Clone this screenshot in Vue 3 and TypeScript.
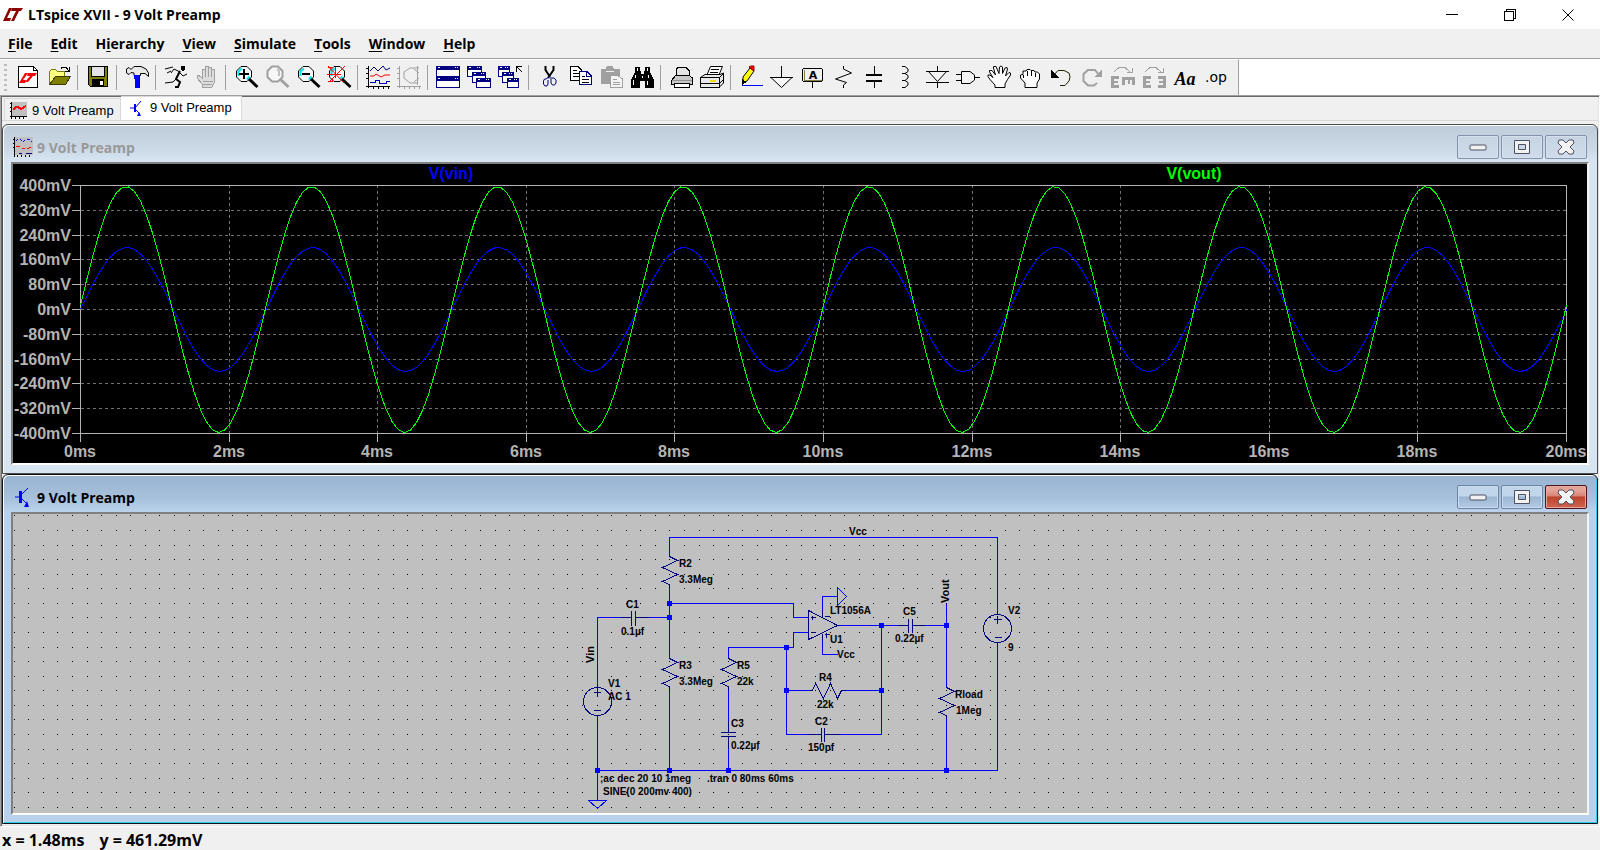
<script setup lang="ts">
interface Shape {
  d: string
  fill?: string
  stroke?: string
  width?: number
  smooth?: boolean
}
interface Tool {
  name: string
  shapes?: Shape[]
  text?: string
  textClass?: string
  disabled?: boolean
}

const line = (d: string, stroke = '#000', width = 1, smooth = false): Shape => ({ d, stroke, width, smooth })
const area = (d: string, fill: string, stroke = 'none', smooth = false): Shape => ({ d, fill, stroke, smooth })

const navy = '#000080'
const grey = '#a0a0a0'
const openHand =
  'M8 23.5V21L3 15.5L1 12.5V11H3L6 13.5L2.5 8V6.5H5L8.5 11L6.5 4V2.5H9L12 9.5L12.5 3L14 2L15.5 3V9.5L18 4L20 3.5L20.5 5L18.5 12L22 8.5L23.5 9V11L20.5 15.5L18 20V23.5Z'
const lens = (stroke: string, cross: string, cyan: boolean): Shape[] => [
  area('M7 2.5H13L17.5 7V13L13 17.5H7L2.5 13V7Z', '#f8f8f8'),
  line('M7 2.5H13L17.5 7V13L13 17.5H7L2.5 13V7Z', stroke, cyan ? 1 : 2, true),
  ...(cyan ? [line('M4.5 12V7.5L8 4.5M13 15.5L15.5 12.5', '#00e0f0', 2, true)] : [line('M12 5L14 7V12', '#c0c0c0', 2, true)]),
  line('M15 15L23.5 23', stroke, 3, true),
  line(cross, stroke, 2),
]
const miniWindow = (x: number, y: number, w: number, h: number): Shape[] => [
  area(`M${x + 0.5} ${y + 0.5}h${w - 1}v${h - 1}h${1 - w}Z`, '#fff', navy),
  area(`M${x} ${y}h${w}v4h${-w}Z`, navy),
  line(`M${x + 2} ${y + 1.5}h2M${x + w - 5} ${y + 1.5}h1M${x + w - 3} ${y + 1.5}h1`, '#fff'),
]

const groups: Tool[][] = [
  [
    {
      name: 'New schematic',
      shapes: [
        area('M2.5 2.5H17.5L21.5 6.5V23.5H2.5Z', '#fff', '#000'),
        line('M17.5 2.5V6.5H21.5'),
        area('M9 9H12L7 16H10L9 19H3Z', '#f00', 'none', true),
        area('M12 9H21L19 12H17L12 18H9L14 12H11Z', '#f00', 'none', true),
      ],
    },
    {
      name: 'Open',
      shapes: [
        area('M2.5 21V7.5L4.5 5.5H8.5L10.5 7.5H17.5V12', '#ffff80', '#808000'),
        area('M2.5 20.5L8.5 12.5H23.5L18.5 20.5Z', '#808000', '#3c3c00'),
        line('M13.5 5.5L15 3.5H19L22 7'),
        line('M22.5 3V8M18 7.5H23'),
      ],
    },
  ],
  [
    {
      name: 'Save',
      shapes: [
        area('M2.5 2.5H21.5V22.5H4.5L2.5 20.5Z', '#808000', '#000'),
        area('M6 3H18V12H6Z', '#e4e4e4'),
        line('M5.5 3V12.5H18.5V3'),
        area('M6 15H18V22H6Z', '#000'),
        area('M14 17H17V21H14Z', '#fff'),
      ],
    },
  ],
  [
    {
      name: 'Control panel',
      shapes: [
        area('M1.5 5L4 3.5L6 5.5L9 2.5H16L21 5L23.5 9V12.5L20 9.5H15.5V11.5H9V9L6 8.5L4 10.5L1.5 9Z', '#e8e8e8', '#000', true),
        area('M9 11H15V15H14V24H10V15H9Z', '#0000ff'),
        line('M14.5 11V24', navy),
      ],
    },
  ],
  [
    {
      name: 'Run',
      shapes: [
        area('M17 2H21V6L19 7L17 6Z', '#000'),
        line('M16 7L12 15L16 18L14 23H11', '#000', 2, true),
        line('M16 8L10 5L7 9M16 9L19 12L23 10', '#000', 1, true),
        line('M12 15L9 18L1 19', '#000', 1, true),
        line('M1 5L9 3M3 9L7 7', '#000', 1, true),
      ],
    },
    {
      name: 'Halt',
      disabled: true,
      shapes: [
        area('M7 23V20L2 14V12L4 11.5L7 14V6L8 5H10V12V3.5L11 2.5H13V12V3.5L14 3H16V12V5.5L17 5L19 5.5V19L17 23Z', '#dcdcdc', grey),
        line('M10.5 5V13M13.5 4V13M16.5 6V13M8 17H18M8 20H17', grey, 1),
      ],
    },
  ],
  [
    { name: 'Zoom in', shapes: lens('#000', 'M5 10H15M10 5V15', true) },
    { name: 'Pan', disabled: true, shapes: lens(grey, '', false) },
    { name: 'Zoom out', shapes: lens('#000', 'M6 10H14', true) },
    {
      name: 'Zoom to fit',
      shapes: [...lens('#000', '', true), line('M1 2L17 19M18 2L2 18', '#f00', 1, true), line('M0 10H14M8 3V14M1 3H5M1 17H5V14', '#f00', 1)],
    },
  ],
  [
    {
      name: 'Autorange',
      shapes: [
        line('M2.5 2V24M0 22.5H24M0 4.5H2M0 9.5H2M0 14.5H2M7.5 23V25M12.5 23V25M17.5 23V25M22.5 23V25'),
        line('M4 7L8 3L12 7L17 2L20 6L24 4', navy, 1, true),
        line('M4 12H8L10 10L15 13L19 11H24', '#f00', 1, true),
        line('M4 18.5H9V16.5H13V19.5H20V17.5H24', '#0000c0'),
      ],
    },
    {
      name: 'Nyquist plot',
      disabled: true,
      shapes: [
        line('M2.5 2V24M0 22.5H24M0 4.5H2M0 9.5H2M0 14.5H2M7.5 23V25M12.5 23V25M17.5 23V25M22.5 23V25', grey),
        line('M22 4H13L7 8V14L13 19H21M20.5 2V21M17 5L22 9M17 18L22 14', grey, 1, true),
      ],
    },
  ],
  [
    { name: 'Tile windows', shapes: [...miniWindow(0, 2, 24, 11), ...miniWindow(0, 13, 24, 11)] },
    { name: 'Cascade windows', shapes: [...miniWindow(0, 2, 15, 11), ...miniWindow(5, 8, 14, 11), ...miniWindow(9, 14, 15, 10)] },
    {
      name: 'Close all windows',
      shapes: [...miniWindow(0, 2, 12, 11), ...miniWindow(4, 8, 12, 11), ...miniWindow(9, 14, 12, 10), line('M18.5 8V2.5H24M19 3L24 8')],
    },
  ],
  [
    {
      name: 'Cut',
      shapes: [
        line('M8.5 2V6L13 13M16.5 2V6L11 14', '#000', 2, true),
        line('M12 13L9 15H7.5L6.5 17V20L8 22H10L11 20V16M12.5 14L15 14H17L19 16V19L17.5 21H15.5L14 19V15', navy, 1, true),
      ],
    },
    {
      name: 'Copy',
      shapes: [
        area('M2.5 2.5H10L13.5 6V16.5H2.5Z', '#fff', '#000'),
        line('M5 6.5H9M5 9.5H11M5 12.5H11'),
        area('M11.5 7.5H19L23.5 12V20.5H11.5Z', '#fff', navy),
        line('M18.5 8V12.5H23', navy),
        line('M14 12.5H17M14 15.5H21M14 18.5H21'),
      ],
    },
    {
      name: 'Paste',
      disabled: true,
      shapes: [
        area('M2 5H7L8 2H14L15 5H21V20H2Z', grey),
        line('M7 7.5H15', '#f0f0f0'),
        area('M11.5 11.5H19L23.5 15V23.5H11.5Z', '#f4f4f4', grey),
        line('M14 15.5H18M14 18.5H21M14 20.5H21', grey),
      ],
    },
    {
      name: 'Find',
      shapes: [
        area('M5 3H10V7H11V10H14V7H15V3H20V8L22 12L24 16V24H15V17H10V24H1V16L3 12L5 8Z', '#000', 'none'),
        line('M7.5 4V7M17.5 4V7M5.5 11V14M3.5 16V21M18.5 11V14M17.5 17V21M12.5 12V14', '#fff', 1),
      ],
    },
  ],
  [
    {
      name: 'Print',
      shapes: [
        area('M7.5 11V5L9 3.5H17L20.5 7V12', '#e4e4e4', '#000'),
        area('M2.5 16.5L6.5 11.5H20.5L23.5 14V20.5H2.5Z', '#c8c8c8', '#000'),
        line('M3 16.5H23', '#909090'),
        area('M5.5 19.5H20.5V23.5H5.5Z', '#fff', '#000'),
      ],
    },
    {
      name: 'Print setup',
      shapes: [
        area('M6.5 12L10.5 2.5H22.5L18.5 12', '#fff', '#000', true),
        line('M11 5.5H19M10 8.5H18'),
        area('M0.5 13.5L5 10.5H20L23.5 9V19L19 23.5H0.5Z', '#e8e8e8', '#000', true),
        line('M0 13.5H19V24M0 19.5H19M19 14L24 9M19 20L24 15'),
        line('M10 16.5H16', '#f0e000', 2),
      ],
    },
  ],
  [
    {
      name: 'Draw wire',
      shapes: [
        area('M4 13L11 4L15 7L8 17L4 19Z', '#ffff00', '#000', true),
        area('M10 3L12 2H15V7Z', '#f00', '#900', true),
        area('M3 15L8 18L3 21Z', '#000'),
        line('M3 21.5H24', '#0000ff'),
      ],
    },
    { name: 'Ground', shapes: [line('M11.5 2V13'), area('M1 13.5H22L11.5 23.5Z', '#f8f8f8', '#000', true), line('M0 13.5H23')] },
    {
      name: 'Label net',
      text: 'A',
      textClass: 'glyph-label',
      shapes: [area('M2.5 4.5H20.5L21.5 5.5V16.5L20.5 17.5H2.5L1.5 16.5V5.5Z', '#f0f0f0', '#000'), line('M3.5 5.5V16.5H20.5', '#808040'), line('M11.5 18V24')],
    },
    { name: 'Resistor', shapes: [line('M11.5 2V5L19.5 9L3.5 15L14.5 18.5L11.5 21V24', '#000', 1, true)] },
    { name: 'Capacitor', shapes: [line('M11.5 2V11M11.5 17V24'), line('M3 11H19M3 17H19', '#000', 2)] },
    { name: 'Inductor', shapes: [line('M8 2.5H11L14 5V7.5L11 9.5H8M11 9.5L14 11.5V14L11 16.5H8M11 16.5L14 18.5V21L11 23.5H8', '#000', 1, true)] },
    { name: 'Diode', shapes: [line('M12.5 2V7M12.5 18V24M1 7.5H24M1 18.5H24'), area('M3.5 7.5H21.5L12.5 17.5Z', '#f4f4f4', '#000', true)] },
    { name: 'Component', shapes: [area('M5.5 7.5H14L18.5 11V16L14 19.5H5.5Z', '#f4f4f4', '#000', true), line('M0 10.5H5M0 16.5H5M19 13.5H24')] },
    { name: 'Move', shapes: [area(openHand, '#fff', '#000', true)] },
    {
      name: 'Drag',
      shapes: [
        area('M7 23.5V19L2.5 14V11L5 10.5V7H8L9 5.5H12L13 6.5H16L17 8H19.5L21.5 10V15L19 19V23.5Z', '#fff', '#000', true),
        line('M9.5 7V12M13.5 7V12M17.5 9V13M5.5 11V14', '#000'),
      ],
    },
    { name: 'Undo', shapes: [line('M4 12L9 6.5H15L20 9L21 13L20 17L16 21.5H11', '#202000', 1, true), area('M2 6V14H10L7 11Z', '#000')] },
    { name: 'Redo', disabled: true, shapes: [line('M19 11L15 6H8L3.5 10V17L8 21.5H14L17 19', grey, 2, true), area('M22 6V13H14Z', grey)] },
    {
      name: 'Rotate',
      disabled: true,
      shapes: [
        line('M3 8L8 3.5H14L19 8M21 4V8.5H16', grey),
        area('M0 12H8V15H3V17H7V19H3V21H8V24H0Z', grey),
        area('M11 13H24V21H21V16H19V20H17V16H14V21H11Z', grey),
      ],
    },
    {
      name: 'Mirror',
      disabled: true,
      shapes: [
        line('M3 8L8 3.5H14L19 8M21 4V8.5H16', grey),
        area('M1 12H9V15H4V17H8V19H4V21H9V24H1Z', grey),
        area('M24 12H16V15H21V17H17V19H21V21H16V24H24Z', grey),
      ],
    },
    { name: 'Text', text: 'Aa', textClass: 'glyph-text' },
    { name: 'SPICE directive', text: '.op', textClass: 'glyph-op' },
  ],
]

const menus = ['File', 'Edit', 'Hierarchy', 'View', 'Simulate', 'Tools', 'Window', 'Help'].map((m) => {
  const at = m === 'Hierarchy' ? 1 : 0
  return { before: m.slice(0, at), key: m[at], after: m.slice(at + 1) }
})

/* Plot geometry */
const left = 80
const right = 1566
const top = 185
const bottom = 433
const zero = 309
const yTicks = Array.from({ length: 11 }, (_, i) => ({
  y: Math.round(top + (i * (bottom - top)) / 10) + 0.5,
  label: `${400 - 80 * i}mV`,
}))
const xTicks = Array.from({ length: 11 }, (_, i) => ({
  x: Math.round(left + (i * (right - left)) / 10) + 0.5,
  label: `${2 * i}ms`,
}))
const trace = (amplitude: number, lead: number): string => {
  const period = (right - left) / 8
  const points: string[] = []
  for (let x = left; x <= right; x += 6) {
    points.push(`${x + 0.5},${(zero + 0.5 - amplitude * Math.sin((2 * Math.PI * (x - left + lead)) / period)).toFixed(1)}`)
  }
  points.push(`${right + 0.5},${(zero + 0.5 - amplitude * Math.sin((2 * Math.PI * lead) / period)).toFixed(1)}`)
  return points.join(' ')
}
const vin = trace(62, 0)
const vout = trace(123, 1)

/* Schematic geometry */
const pitch = 14.573
let dots = ''
for (let r = 0; r < 21; r++) {
  for (let c = 0; c < 108; c++) {
    dots += `M${Math.round(13.68 + c * pitch)} ${Math.round(515.45 + r * pitch)}h1v1h-1z`
  }
}
const wires = [
  'M669 556V537H997V614', 'M669 585V658', 'M669 687V770', 'M597 688V617H620', 'M648 617H669', 'M669 603H793V617H808',
  'M808 632H793V647H728V658', 'M728 687V720', 'M728 748V770', 'M786 647V734H808', 'M786 690H808', 'M845 690H881',
  'M838 734H881V625', 'M837 625H897', 'M924 625H946', 'M946 603V686', 'M946 716V770', 'M997 642V770H597', 'M597 716V800',
  'M588 800H606L597 808Z', 'M822 609V596H837', 'M837 587V605L846 596Z', 'M822 640V654H837',
].join('')
const zig = (x: number, y: number) => `M${x} ${y}v1l8 4l-15 7l15 7l-15 7l7 3v3`
const symbols = [
  zig(669, 555), zig(669, 657), zig(728, 657), zig(946, 686),
  'M808 690H812L815 683L823 698L830 683L837 698L841 690H845',
  'M620 617H631M631 610V625M635 610V625M635 617H648',
  'M897 625H908M908 618V632M912 618V632M912 625H924',
  'M808 734H821M821 727V741M824 727V741M824 734H838',
  'M728 720V732M720 732H735M720 736H735M728 736V748',
  'M597 688V684M593 692H600M597 688V696M593 710H600M597 715V720',
  'M997 610V614M993 619H1001M997 615V623M994 637H1001M997 642V646',
  'M808 610V639L837 625Z', 'M810 617H814M812 615V619M810 632H814', 'M822 609V617M824 616H829M822 633V640M824 634H829M826 632V637',
].join('')
const joints = [[669, 603], [669, 617], [786, 647], [786, 690], [881, 690], [881, 625], [946, 625], [597, 770], [669, 770], [728, 770], [946, 770]]
const labels: { x: number; y: number; t: string }[] = [
  { x: 849, y: 535, t: 'Vcc' }, { x: 679, y: 567, t: 'R2' }, { x: 679, y: 583, t: '3.3Meg' }, { x: 626, y: 608, t: 'C1' },
  { x: 621, y: 635, t: '0.1µf' }, { x: 679, y: 669, t: 'R3' }, { x: 679, y: 685, t: '3.3Meg' }, { x: 737, y: 669, t: 'R5' },
  { x: 737, y: 685, t: '22k' }, { x: 608, y: 687, t: 'V1' }, { x: 608, y: 700, t: 'AC 1' }, { x: 731, y: 727, t: 'C3' },
  { x: 731, y: 749, t: '0.22µf' }, { x: 819, y: 681, t: 'R4' }, { x: 817, y: 708, t: '22k' }, { x: 815, y: 725, t: 'C2' },
  { x: 808, y: 751, t: '150pf' }, { x: 830, y: 614, t: 'LT1056A' }, { x: 830, y: 643, t: 'U1' }, { x: 837, y: 658, t: 'Vcc' },
  { x: 903, y: 615, t: 'C5' }, { x: 895, y: 642, t: '0.22µf' }, { x: 1008, y: 614, t: 'V2' }, { x: 1008, y: 651, t: '9' },
  { x: 955, y: 698, t: 'Rload' }, { x: 956, y: 714, t: '1Meg' }, { x: 600, y: 782, t: ';ac dec 20 10 1meg' },
  { x: 707, y: 782, t: '.tran 0 80ms 60ms' }, { x: 603, y: 795, t: 'SINE(0 200mv 400)' },
]
</script>

<template>
  <div class="app">
    <header class="titlebar">
      <svg class="logo" width="20" height="14" viewBox="0 0 20 14" aria-hidden="true">
        <path d="M6 0H9L4 10H8L7 13H0Z" fill="#8b0000" />
        <path d="M9 0H20L18 3H16L11 13H8L13 3H8Z" fill="#8b0000" />
      </svg>
      <h1>LTspice XVII - 9 Volt Preamp</h1>
      <div class="chrome">
        <button aria-label="Minimize"><svg width="12" height="12"><path d="M0 5.5H12" /></svg></button>
        <button aria-label="Restore"><svg width="12" height="12"><path d="M0.5 2.5H9.5V11.5H0.5ZM2.5 2V0.5H11.5V9.5H10" /></svg></button>
        <button aria-label="Close"><svg class="smooth" width="12" height="12"><path d="M0.5 0.5L11.5 11.5M11.5 0.5L0.5 11.5" /></svg></button>
      </div>
    </header>

    <nav class="menubar">
      <button v-for="m in menus" :key="m.key + m.after">{{ m.before }}<u>{{ m.key }}</u>{{ m.after }}</button>
    </nav>

    <div class="toolrow">
      <div class="toolbar" role="toolbar" aria-label="Tools">
        <span class="grip"></span>
        <div v-for="(g, gi) in groups" :key="gi" class="group">
          <button v-for="t in g" :key="t.name" :aria-label="t.name" :disabled="t.disabled">
            <svg width="25" height="25" viewBox="0 0 25 25">
              <path
                v-for="(s, si) in t.shapes"
                :key="si"
                :d="s.d"
                :fill="s.fill ?? 'none'"
                :stroke="s.stroke ?? 'none'"
                :stroke-width="s.width ?? 1"
                :shape-rendering="s.smooth ? 'auto' : 'crispEdges'"
              />
              <text v-if="t.text" :class="t.textClass" x="12" :y="t.text === 'A' ? 15 : t.text === 'Aa' ? 21 : 18" text-anchor="middle">{{ t.text }}</text>
            </svg>
          </button>
        </div>
      </div>
    </div>

    <main class="workspace">
      <div class="tabs" role="tablist">
        <button class="tab" role="tab" aria-selected="false">
          <svg width="17" height="17" viewBox="0 0 17 17" shape-rendering="crispEdges">
            <rect x="2" width="15" height="15" fill="#c0c0c0" />
            <path d="M1.5 0V17M0 1.5H2M0 5.5H2M0 9.5H2M0 14.5H17M5.5 14V17M9.5 14V17M13.5 14V17" fill="none" stroke="#000" />
            <path d="M3 8L6 5H8L11 7L16 4" fill="none" stroke="#f00" stroke-width="2" />
          </svg>
          <span>9 Volt Preamp</span>
        </button>
        <button class="tab active" role="tab" aria-selected="true">
          <svg width="17" height="17" viewBox="0 0 17 17">
            <path d="M0 8H4M5 8L11 1M6 10L10 14" fill="none" stroke="#00f" />
            <path d="M4 4H6V12H4ZM11 16H7L9 12Z" fill="#00f" />
          </svg>
          <span>9 Volt Preamp</span>
        </button>
      </div>

      <section class="window">
        <header class="caption">
          <svg width="20" height="20" viewBox="0 0 20 20" shape-rendering="crispEdges">
            <rect x="2" width="18" height="18" fill="#c0c0c0" />
            <path d="M1.5 0V20M0 2.5H2M0 6.5H2M0 10.5H2M4.5 18V20M8.5 18V20M12.5 18V20M16.5 18V20" fill="none" stroke="#000" />
            <path d="M3 4L6 1L10 5L13 2L15 2L19 5" fill="none" stroke="#00f" stroke-dasharray="3 2" />
            <path d="M3 9.5H7L10 11.5H15L19 9.5" fill="none" stroke="#f00" stroke-dasharray="4 2" />
            <path d="M6 16.5H9M13 16.5H19" fill="none" stroke="#000080" />
          </svg>
          <h2>9 Volt Preamp</h2>
          <div class="controls">
            <button aria-label="Minimize plot"><svg width="20" height="16"><rect x="2" y="6" width="16" height="5" rx="1" /></svg></button>
            <button aria-label="Maximize plot"><svg width="20" height="16"><path fill-rule="evenodd" d="M2.5 1.5H17.5V14.5H2.5ZM6.5 5.5V10.5H13.5V5.5Z" /></svg></button>
            <button aria-label="Close plot"><svg width="20" height="16"><path d="M3 1H7L10 4L13 1H17L18 4L14 8L18 12L17 15H13L10 12L7 15H3L2 12L6 8L2 4Z" /></svg></button>
          </div>
        </header>
        <svg class="view plot" viewBox="13 164 1574 299" role="img" aria-label="Waveforms">
          <g class="grid">
            <path v-for="t in yTicks.slice(1, 10)" :key="t.y" :d="`M81 ${t.y}H${right}`" />
            <path v-for="t in xTicks.slice(1, 10)" :key="t.x" :d="`M${t.x} ${top}V${bottom}`" />
          </g>
          <g class="axis">
            <path d="M80.5 185.5H1566.5V433.5H80.5Z" />
            <path v-for="t in yTicks" :key="t.y" :d="`M72 ${t.y}H80`" />
            <path v-for="t in xTicks" :key="t.x" :d="`M${t.x} 433V442`" />
          </g>
          <polyline class="trace vin" :points="vin" />
          <polyline class="trace vout" :points="vout" />
          <text v-for="t in yTicks" :key="t.label" x="71" :y="Math.floor(t.y) + 6" text-anchor="end">{{ t.label }}</text>
          <text v-for="t in xTicks" :key="t.label" :x="Math.floor(t.x)" y="457" text-anchor="middle">{{ t.label }}</text>
          <text class="name-vin" x="451" y="179" text-anchor="middle">V(vin)</text>
          <text class="name-vout" x="1194" y="179" text-anchor="middle">V(vout)</text>
        </svg>
      </section>

      <section class="window active">
        <header class="caption">
          <svg width="20" height="20" viewBox="0 0 20 20">
            <path d="M2 10H6M8 8L15 1M8 11L14 17" fill="none" stroke="#00f" />
            <path d="M6 4H9V16H6ZM16 20H11L14 14Z" fill="#00f" />
          </svg>
          <h2>9 Volt Preamp</h2>
          <div class="controls">
            <button aria-label="Minimize schematic"><svg width="20" height="16"><rect x="2" y="6" width="16" height="5" rx="1" /></svg></button>
            <button aria-label="Maximize schematic"><svg width="20" height="16"><path fill-rule="evenodd" d="M2.5 1.5H17.5V14.5H2.5ZM6.5 5.5V10.5H13.5V5.5Z" /></svg></button>
            <button class="close" aria-label="Close schematic"><svg width="20" height="16"><path d="M3 1H7L10 4L13 1H17L18 4L14 8L18 12L17 15H13L10 12L7 15H3L2 12L6 8L2 4Z" /></svg></button>
          </div>
        </header>
        <svg class="view schematic" viewBox="13 514 1574 299" role="img" aria-label="Preamp schematic">
          <path class="dots" :d="dots" />
          <g transform="translate(0.5 0.5)">
            <path class="wire" :d="wires" />
            <path class="symbol" :d="symbols" />
            <circle class="symbol" cx="597" cy="701" r="14" />
            <circle class="symbol" cx="997" cy="628" r="14" />
          </g>
          <rect v-for="j in joints" :key="j.join()" class="joint" :x="j[0] - 2" :y="j[1] - 2" width="5" height="5" />
          <text v-for="l in labels" :key="l.x + l.t + l.y" :x="l.x" :y="l.y">{{ l.t }}</text>
          <text class="net" transform="translate(594 663) rotate(-90)">Vin</text>
          <text class="net" transform="translate(949 603) rotate(-90)">Vout</text>
        </svg>
      </section>
    </main>

    <footer class="status"><span>x = 1.48ms</span><span>y = 461.29mV</span></footer>
  </div>
</template>

<style>
body {
  margin: 0;
}
</style>

<style scoped>
.app {
  display: flex;
  flex-direction: column;
  min-height: 100vh;
  background: #f0f0f0;
  color: #000;
  font: 700 14px/20px "Open Sans", "Noto Sans", sans-serif;
}
button {
  margin: 0;
  padding: 0;
  border: 0;
  background: none;
  color: inherit;
  font: inherit;
}
h1,
h2 {
  margin: 0;
  font: inherit;
}
svg {
  display: block;
}
.titlebar {
  display: flex;
  align-items: center;
  gap: 5px;
  height: 29px;
  padding: 0 3px;
  background: #fff;
}
.chrome {
  display: flex;
  margin-left: auto;
}
.chrome button {
  display: grid;
  place-items: center;
  width: 58px;
  height: 29px;
}
.chrome svg {
  fill: none;
  stroke: #000;
  shape-rendering: crispEdges;
}
.chrome .smooth {
  shape-rendering: auto;
}
.menubar {
  display: flex;
  gap: 18px;
  height: 29px;
  padding: 0 8px;
  border-bottom: 1px solid #a0a0a0;
}
.menubar u {
  text-underline-offset: 2px;
}
.toolrow {
  background: #fff;
}
.toolbar {
  display: flex;
  width: fit-content;
  height: 35px;
  padding: 0 6px 0 4px;
  border-top: 1px solid #fff;
  border-right: 1px solid #a0a0a0;
  background: #f0f0f0;
}
.grip {
  width: 3px;
  height: 27px;
  margin: 4px 6px 0 0;
  background: repeating-linear-gradient(#bdbdbd 0 2px, transparent 2px 5px);
}
.group {
  display: flex;
}
.group + .group {
  padding-left: 8px;
  background: linear-gradient(#a0a0a0, #a0a0a0) 2px 5px / 1px 25px no-repeat;
}
.group button {
  display: flex;
  justify-content: center;
  width: 31px;
  padding-top: 4px;
}
.glyph-label {
  font: 700 11px "DejaVu Sans", sans-serif;
}
.glyph-text {
  font: italic 700 18px "Liberation Serif", serif;
}
.glyph-op {
  font: 400 14px "DejaVu Sans", sans-serif;
}
.workspace {
  flex: 1;
  border: solid;
  border-width: 1px;
  border-color: #a0a0a0 #fff #fff #a0a0a0;
  box-shadow: inset 1px 1px #696969, inset -1px -1px #e3e3e3;
  padding: 1px 1px 2px;
}
.tabs {
  display: flex;
  align-items: flex-end;
  height: 24px;
  margin-bottom: 3px;
  padding-left: 2px;
  border-bottom: 1px solid #d9d9d9;
  box-sizing: border-box;
  font: 400 13px/20px "Liberation Sans", Arial, sans-serif;
}
.tab {
  display: flex;
  align-items: center;
  box-sizing: border-box;
  gap: 5px;
  width: 117px;
  height: 22px;
  padding: 2px 0 0 5px;
  border: 1px solid #d9d9d9;
  border-bottom: 0;
  white-space: nowrap;
}
.tab.active {
  width: 121px;
  height: 24px;
  gap: 3px;
  padding: 0 0 1px 9px;
  border-left: 0;
  background: #fff;
}
.window {
  box-sizing: border-box;
  border: 1px solid #4c4c4c;
  border-radius: 6px 6px 0 0;
  padding: 0 8px 8px;
  background: linear-gradient(#bfcddb, #cbd8e6 24px, #d7e4f2 36px);
  box-shadow: inset 1px 1px #fff;
  color: #999;
}
.window.active {
  border-color: #101018;
  background: linear-gradient(#99b4d1, #a8c1dc 24px, #b9d1ea 36px);
  box-shadow: inset 1px 1px #fff, inset -1px -1px #2ad0e8;
  color: #000;
}
.caption {
  display: flex;
  align-items: center;
  gap: 4px;
  height: 24px;
  padding: 10px 2px 3px;
}
.caption h2 {
  line-height: 18px;
  padding-top: 2px;
}
.controls {
  display: flex;
  gap: 2px;
  margin-left: auto;
}
.controls button {
  display: grid;
  place-items: center;
  box-sizing: border-box;
  width: 42px;
  height: 24px;
  border: 1px solid #8393ad;
  border-radius: 2px;
  background: linear-gradient(#c6d3e1, #d0dceb);
  box-shadow: inset 0 0 0 1px #d5e0ec;
}
.active .controls button {
  border-color: #6c84a5;
  background: linear-gradient(#c1d5eb 0 45%, #9cb6d3 50%, #b4cbe4);
  box-shadow: inset 0 0 0 1px #cbdcee;
}
.active .controls .close {
  border-color: #4b1420;
  background: linear-gradient(#e5a297 0 20%, #d98476 45%, #bc432c 50%, #d06450);
  box-shadow: inset 0 0 0 1px #e5a89d;
}
.controls svg {
  fill: #f2f2f2;
  stroke: #4c5064;
}
.view {
  width: 100%;
  height: auto;
  border: 2px solid #808080;
  border-right-color: #f4f4f4;
  border-bottom-color: #fff;
  box-sizing: border-box;
}
.plot {
  background: #000;
}
.plot text {
  fill: #b4b4b4;
  font: 700 16px "Liberation Sans", Arial, sans-serif;
}
.plot .name-vin {
  fill: #0000ff;
}
.plot .name-vout {
  fill: #00ff00;
}
.grid,
.axis,
.trace {
  fill: none;
  shape-rendering: crispEdges;
}
.grid {
  stroke: #707070;
  stroke-dasharray: 3 3;
}
.axis {
  stroke: #b4b4b4;
}
.vin {
  stroke: #0000ff;
}
.vout {
  stroke: #00ff00;
}
.schematic {
  background: #c0c0c0;
}
.schematic text {
  fill: #000;
  font: 700 10px "Liberation Sans", Arial, sans-serif;
}
.schematic .net {
  font-size: 11px;
}
.dots {
  fill: #000;
  shape-rendering: crispEdges;
}
.wire,
.symbol {
  fill: none;
  stroke: #0000ff;
  shape-rendering: crispEdges;
}
.symbol {
  stroke: #000080;
}
.joint {
  fill: #0000ff;
}
.status {
  display: flex;
  gap: 15px;
  height: 23px;
  padding: 0 2px;
  font-size: 16px;
  line-height: 26px;
  overflow: hidden;
}
</style>
